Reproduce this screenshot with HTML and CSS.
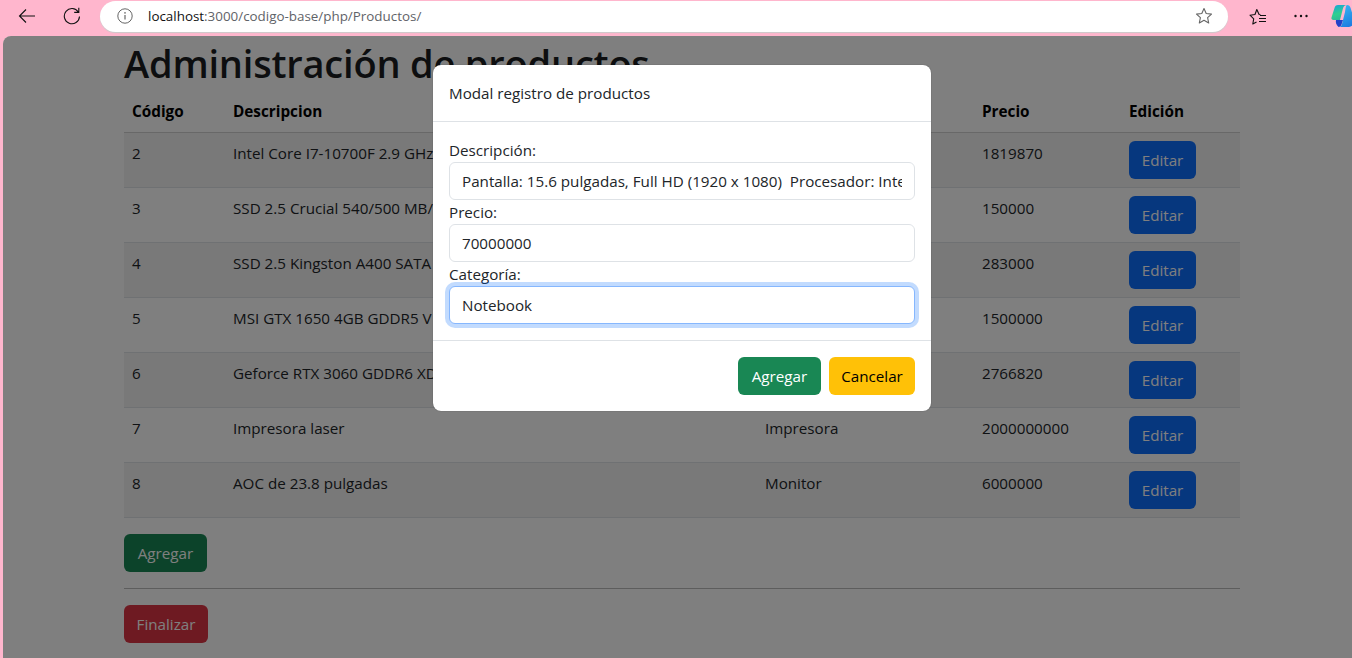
FILE: index.html
```html
<!DOCTYPE html>
<html lang="es">
<head>
<meta charset="utf-8">
<title>Productos</title>
<link rel="stylesheet" href="styles.css">
</head>
<body>
<header class="chrome">
  <button class="tool tool-back" aria-label="Atrás">
    <svg width="18" height="18" viewBox="0 0 18 18"><path d="M17 9H1.500M8 2.500 1.500 9 8 15.500" fill="none" stroke="#111" stroke-width="1.1"/></svg>
  </button>
  <button class="tool tool-reload" aria-label="Recargar">
    <svg width="18" height="18" viewBox="0 0 18 18"><path d="M15.300 5A7.600 7.600 0 1 0 16.500 9.500M15.800 .8v4.600h-4.600" fill="none" stroke="#111" stroke-width="1.1"/></svg>
  </button>
  <div class="address">
    <svg class="info" width="16" height="16" viewBox="0 0 16 16"><circle cx="8" cy="8" r="7.200" fill="none" stroke="#666" stroke-width="1"/><path d="M8 7v4.500" stroke="#666" stroke-width="1.200"/><circle cx="8" cy="4.900" r=".8" fill="#666"/></svg>
    <span class="url"><span class="host">localhost</span>:3000/codigo-base/php/Productos/</span>
    <svg class="star" width="18" height="18" viewBox="0 0 18 18"><path d="m9 1.600 2.200 4.900 5.300.6-3.900 3.600 1.100 5.300L9 13.300l-4.700 2.700 1.100-5.300-3.900-3.600 5.300-.6z" fill="none" stroke="#666" stroke-width="1.100" stroke-linejoin="round"/></svg>
  </div>
  <button class="tool tool-fav" aria-label="Favoritos">
    <svg width="18" height="18" viewBox="0 0 18 18"><path d="M7.500 15 3.800 17l.9-5.200L1 8.200l5-.7L7.800 2.500l2.300 5 1.400.2" fill="none" stroke="#111" stroke-width="1.100" stroke-linejoin="round"/><path d="M11 8.500h6M10 11.500h7M10 14.500h7" stroke="#111" stroke-width="1.100"/></svg>
  </button>
  <button class="tool tool-more" aria-label="Más">
    <svg width="16" height="4" viewBox="0 0 16 4"><circle cx="2.500" cy="2" r="1.200" fill="#111"/><circle cx="8" cy="2" r="1.200" fill="#111"/><circle cx="13.500" cy="2" r="1.200" fill="#111"/></svg>
  </button>
  <svg class="copilot" width="24" height="22" viewBox="0 0 24 22">
    <defs>
      <linearGradient id="cpa" x1="0.200" y1="0" x2="0.500" y2="1"><stop offset="0" stop-color="#1aa5d6"/><stop offset=".6" stop-color="#2fd08e"/><stop offset="1" stop-color="#2fb89a"/></linearGradient>
      <linearGradient id="cpb" x1="0.300" y1="0" x2="0.700" y2="1"><stop offset="0" stop-color="#39b6f2"/><stop offset="1" stop-color="#1b7be0"/></linearGradient>
    </defs>
    <path d="M7 0h9c-2.500 0-3.500 1.500-4.200 4L9 15H2.500C1 15 0 14 .5 12.500L3.500 3C4 1 5 0 7 0z" fill="url(#cpa)"/>
    <path d="M5 15h7l-1.500 4.500C10 21 9 22 7.500 22 5 20 4.500 17 5 15z" fill="#2342c8"/>
    <path d="M16 0c2 0 3 1 3.600 3L23 14c.8 3-1 8-5 8H7.500C9.500 22 10.500 21 11 19L14 7c.6-3 .8-7 2-7z" fill="url(#cpb)"/>
  </svg>
</header>

<div class="viewport">
  <main class="container">
    <h1 class="title">Administración de productos</h1>
    <table class="table">
      <thead>
        <tr><th class="c-code">Código</th><th class="c-desc">Descripcion</th><th class="c-cat">Categoría</th><th class="c-price">Precio</th><th class="c-edit">Edición</th></tr>
      </thead>
      <tbody>
        <tr class="odd"><td>2</td><td>Intel Core I7-10700F 2.9 GHz</td><td>Procesador</td><td>1819870</td><td><button class="btn btn-blue">Editar</button></td></tr>
        <tr><td>3</td><td>SSD 2.5 Crucial 540/500 MB/s</td><td>Disco</td><td>150000</td><td><button class="btn btn-blue">Editar</button></td></tr>
        <tr class="odd"><td>4</td><td>SSD 2.5 Kingston A400 SATA</td><td>Disco</td><td>283000</td><td><button class="btn btn-blue">Editar</button></td></tr>
        <tr><td>5</td><td>MSI GTX 1650 4GB GDDR5 V</td><td>Video</td><td>1500000</td><td><button class="btn btn-blue">Editar</button></td></tr>
        <tr class="odd"><td>6</td><td>Geforce RTX 3060 GDDR6 XD</td><td>Video</td><td>2766820</td><td><button class="btn btn-blue">Editar</button></td></tr>
        <tr><td>7</td><td>Impresora laser</td><td>Impresora</td><td>2000000000</td><td><button class="btn btn-blue">Editar</button></td></tr>
        <tr class="odd"><td>8</td><td>AOC de 23.8 pulgadas</td><td>Monitor</td><td>6000000</td><td><button class="btn btn-blue">Editar</button></td></tr>
      </tbody>
    </table>
    <button class="btn btn-green">Agregar</button>
    <hr class="rule">
    <button class="btn btn-red">Finalizar</button>
  </main>
  <div class="backdrop"></div>
  <section class="modal">
    <div class="modal-header">Modal registro de productos</div>
    <div class="modal-body">
      <label class="label" for="d">Descripción:</label>
      <input class="input" id="d" value="Pantalla: 15.6 pulgadas, Full HD (1920 x 1080)  Procesador: Intel Core i7">
      <label class="label" for="p">Precio:</label>
      <input class="input" id="p" value="70000000">
      <label class="label" for="c">Categoría:</label>
      <input class="input input-focus" id="c" value="Notebook">
    </div>
    <div class="modal-footer">
      <button class="btn btn-green">Agregar</button>
      <button class="btn btn-yellow">Cancelar</button>
    </div>
  </section>
</div>
</body>
</html>
```

FILE: styles.css
```css
* { box-sizing: border-box; }
html, body { margin: 0; height: 100%; overflow: hidden; }
body {
  background: #ffb6cd;
  font-family: "Open Sans", "Noto Sans", sans-serif;
  font-size: 15.2px;
  line-height: 24px;
  color: #212529;
  display: flex;
  flex-direction: column;
}
button { font-family: inherit; }

.chrome { height: 36px; display: flex; align-items: center; padding-bottom: 4px; flex: none; }
.chrome > * { flex: none; }
.tool { background: none; border: 0; padding: 0; display: flex; align-items: center; justify-content: center; height: 32px; }
.tool-back { width: 18px; margin-left: 18px; }
.tool-reload { width: 18px; margin-left: 27px; }
.address {
  width: 1128px; height: 31px; margin-left: 19px; background: #fff;
  border-radius: 16px; display: flex; align-items: center;
  padding: 0 15px 0 17px; box-shadow: 0 1px 1px #ccc;
}
.url { margin-left: 15px; font-size: 13.4px; color: #5f6368; flex: 1; }
.host { color: #111; }
.tool-fav { width: 18px; margin-left: 21px; }
.tool-more { width: 16px; margin-left: 26px; }
.copilot { margin-left: 22px; }

.viewport { flex: 1; margin-left: 3px; position: relative; background: #fff; border-radius: 8px 0 0 0; overflow: hidden; }
.container { width: 1116px; margin-left: 121px; }
.title { margin: 0; font-size: 38px; line-height: 54px; font-weight: 600; height: 55px; letter-spacing: -.2px; color: #1a1d20; }
.table { width: 1116px; border-collapse: collapse; table-layout: fixed; margin: 0 0 16px; }
.table th { text-align: left; font-weight: 700; height: 41px; padding: 0 8px; border-bottom: 1px solid #d0d0d0; font-size: 15.3px; color: #000; }
.table td { height: 55px; padding: 8px; vertical-align: top; border-bottom: 1px solid #dee2e6; }
.odd td { background: #f2f2f2; }
.c-code { width: 101px; }
.c-desc { width: 532px; }
.c-cat { width: 217px; }
.c-price { width: 147px; }
.c-edit { width: 119px; }

.btn { display: inline-block; height: 38px; padding: 0; border-radius: 6px; border: 0; font-size: 15.2px; line-height: 38px; text-align: center; }
.btn-blue { width: 67px; background: #0d6efd; color: #fff; }
.btn-green { width: 83px; background: #198754; color: #fff; }
.btn-red { width: 84px; background: #dc3545; color: #fff; }
.btn-yellow { width: 86px; background: #ffc107; color: #000; }
.rule { border: 0; border-top: 1px solid #bbb; margin: 16px 0; }

.backdrop { position: absolute; inset: 0; background: rgba(0,0,0,.5); }
.modal {
  position: absolute; left: 430px; top: 29px; width: 498px; background: #fff;
  border-radius: 8px; box-shadow: 0 0 1px rgba(0,0,0,.5);
}
.modal-header { height: 57px; padding: 16px; border-bottom: 1px solid #dee2e6; }
.modal-body { padding: 16px; height: 218px; display: flex; flex-direction: column; }
.label { display: block; height: 24px; line-height: 24px; }
.input { height: 38px; width: 100%; border: 1px solid #dee2e6; border-radius: 6px; padding: 0 12px; font: inherit; color: #212529; outline: 0; }
.input-focus { border-color: #86b7fe; box-shadow: 0 0 0 4px rgba(13,110,253,.25); }
.modal-footer { height: 71px; border-top: 1px solid #dee2e6; padding: 16px; display: flex; justify-content: flex-end; gap: 8px; }
```
